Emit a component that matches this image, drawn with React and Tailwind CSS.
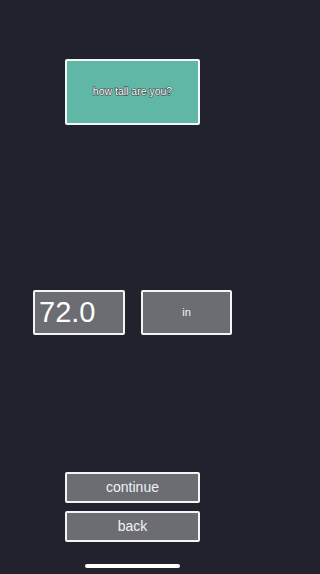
export default function App() {
  const font = { fontFamily: '"Liberation Sans", Arial, sans-serif' };
  return (
    <div className="w-full min-h-screen bg-[#21222d]">
      <div className="w-[265px] h-[574px] bg-[#21222d] flex flex-col items-center overflow-hidden" style={font}>
        <div className="mt-[59px] w-[135px] h-[66px] bg-[#61b7a5] border-2 border-[#f4f4f4] rounded-[2px] flex items-center justify-center">
          <span
            className="text-[10.5px] text-white"
            style={{ WebkitTextStroke: '1.2px #3b4046', paintOrder: 'stroke fill' }}
          >
            how tall are you?
          </span>
        </div>
        <div className="mt-[165px] flex gap-[16px]">
          <div className="w-[92px] h-[45px] bg-[#6b6d73] border-2 border-[#f4f4f4] rounded-[2px] flex items-center pl-[4px]">
            <span className="text-[29px] leading-none text-white">72.0</span>
          </div>
          <div className="w-[91px] h-[45px] bg-[#6b6d73] border-2 border-[#f4f4f4] rounded-[2px] flex items-center justify-center">
            <span className="text-[11px] text-[#f2f2f2]">in</span>
          </div>
        </div>
        <div className="mt-[137px] flex flex-col gap-[8px]">
          <div className="w-[135px] h-[31px] bg-[#6b6d73] border-2 border-[#f4f4f4] rounded-[2px] flex items-center justify-center">
            <span className="text-[14px] text-[#f2f2f2]">continue</span>
          </div>
          <div className="w-[135px] h-[31px] bg-[#6b6d73] border-2 border-[#f4f4f4] rounded-[2px] flex items-center justify-center">
            <span className="text-[14px] text-[#f2f2f2]">back</span>
          </div>
        </div>
        <div className="mt-[22px] w-[95px] h-[4px] rounded-full bg-white" />
      </div>
    </div>
  );
}
